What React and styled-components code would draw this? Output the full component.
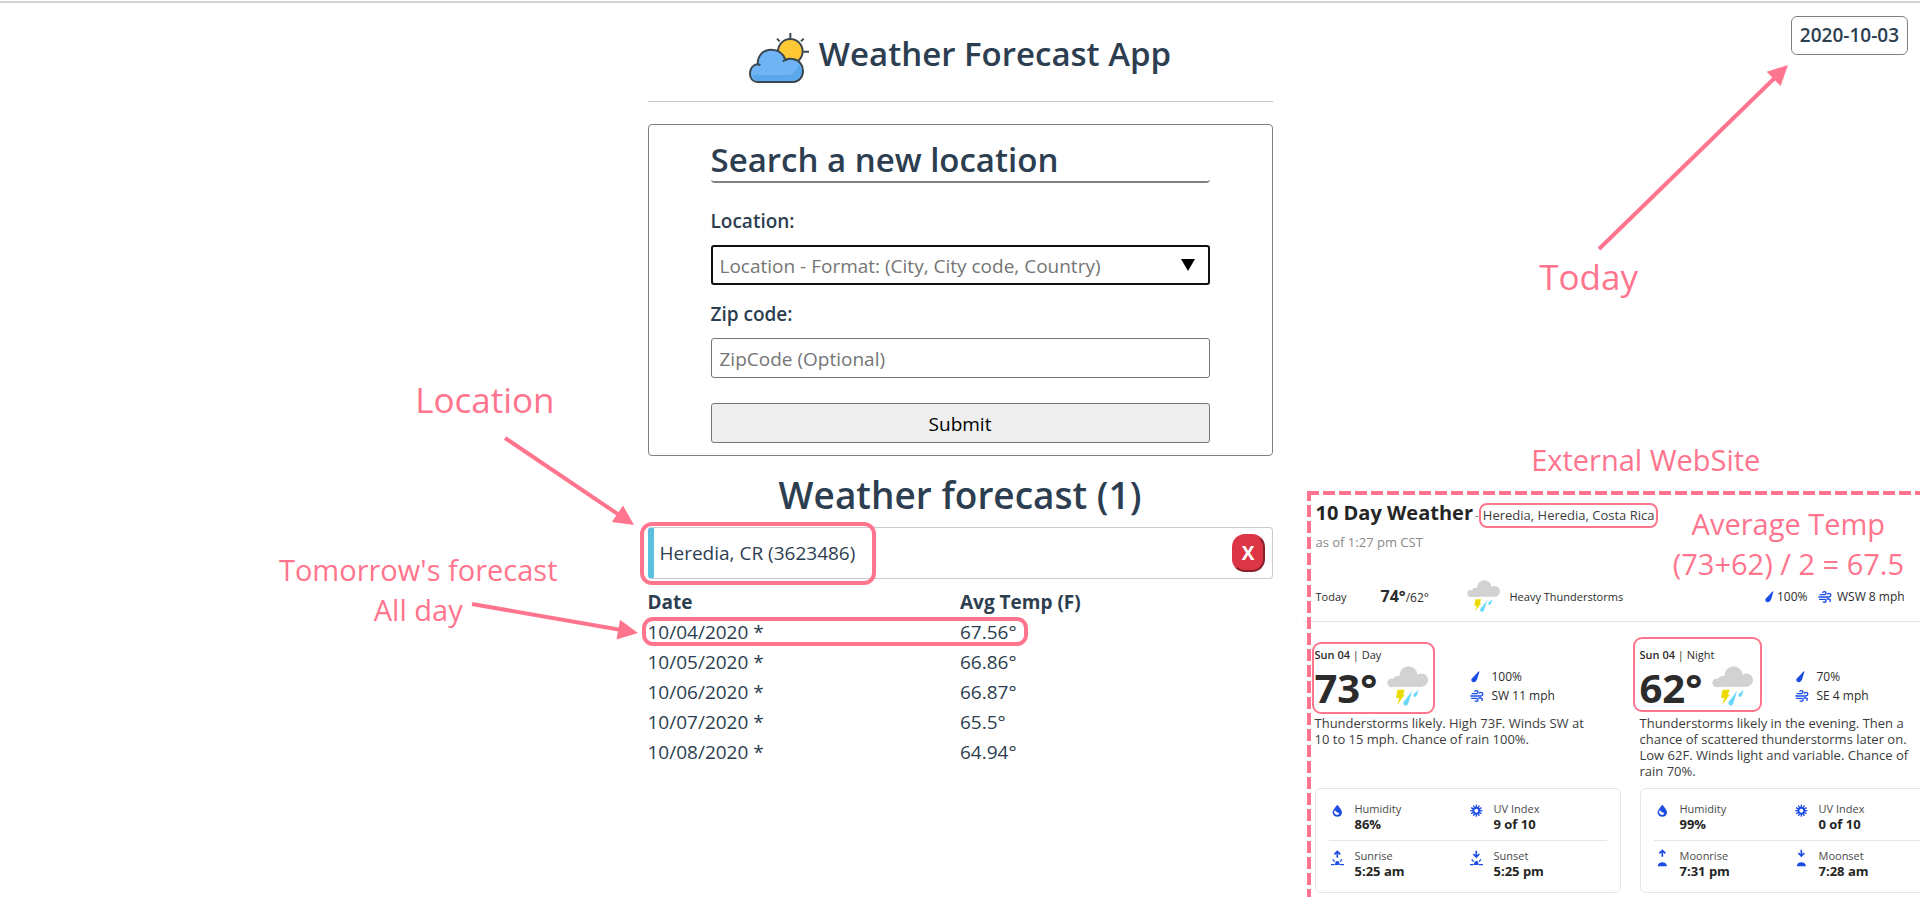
import React from "react";
import styled, { createGlobalStyle } from "styled-components";

const PINK = "#ff758e";
const INK = "#2c3e50";
const BLUE = "#1b4de4";

const GlobalStyle = createGlobalStyle`
  *, *::before, *::after { box-sizing: border-box; }
  body {
    margin: 0;
    background: #fff;
    color: ${INK};
    font-family: "Open Sans", "Noto Sans", sans-serif;
    font-size: 19px;
    line-height: 30px;
  }
  h1, h2, h3, p { margin: 0; }
`;

const Page = styled.div`
  min-height: 100vh;
  padding-top: 1px;
  overflow: hidden;
`;

const TopLine = styled.div`
  height: 2px;
  background: #d1d3d1;
`;

const Columns = styled.div`
  display: grid;
  grid-template-columns: minmax(0, 1fr) 625px minmax(0, 1fr);
`;

const Main = styled.main`
  grid-column: 2;
`;

const Header = styled.header`
  display: flex;
  justify-content: center;
  gap: 10px;
  padding: 26px 0 16px;
  border-bottom: 1px solid #c4c4c4;
`;

const AppTitle = styled.h1`
  font-size: 33px;
  font-weight: 600;
  line-height: 50px;
`;

const SearchForm = styled.form`
  display: flex;
  flex-direction: column;
  margin-top: 22px;
  padding: 14px 62px 12px;
  border: 1px solid #808080;
  border-radius: 4px;
`;

const FormTitle = styled.h2`
  font-size: 33px;
  font-weight: 600;
  line-height: 42px;
  border-bottom: 2px solid #808080;
  border-radius: 4px;
  margin-bottom: 23px;
`;

const Label = styled.label`
  font-weight: 600;
  margin-bottom: 9px;
`;

const Combo = styled.div`
  position: relative;
  display: flex;
  margin-bottom: 14px;

  svg {
    position: absolute;
    right: 15px;
    top: 14px;
  }
`;

const TextInput = styled.input`
  width: 100%;
  height: 40px;
  border: ${(p) => (p.$active ? "2px solid #101010" : "1px solid #767676")};
  padding: ${(p) => (p.$active ? "1px 7px 0" : "1px 8px 0")};
  border-radius: 3px;
  background: #fff;
  color: ${INK};
  font: inherit;
  outline: none;

  &::placeholder {
    color: #757575;
    opacity: 1;
  }
`;

const SubmitButton = styled.button`
  height: 40px;
  margin-top: 25px;
  padding: 2px 8px 0;
  border: 1px solid #767676;
  border-radius: 3px;
  background: #efefef;
  color: #000;
  font: inherit;
`;

const ForecastTitle = styled.h2`
  margin-top: 13px;
  font-size: 37px;
  font-weight: 600;
  line-height: 52px;
  text-align: center;
`;

const Anchor = styled.div`
  position: relative;
  margin-top: ${(p) => p.$top || 0}px;
`;

const LocationCard = styled.div`
  display: flex;
  align-items: center;
  justify-content: space-between;
  height: 52px;
  padding: 0 7px 0 6px;
  border: 1px solid #ccc;
  border-left: 6px solid #5bc0de;
  border-radius: 4px;
`;

const RemoveButton = styled.button`
  width: 33px;
  height: 38px;
  padding: 0;
  border: 2px outset #dc3545;
  border-radius: 13px;
  background: #dc3545;
  color: #fff;
  font: inherit;
  font-weight: 700;
`;

const ForecastTable = styled.table`
  width: 100%;
  margin-top: 8px;
  border-collapse: collapse;
  table-layout: fixed;

  th, td {
    height: 30px;
    padding: 0;
    text-align: left;
  }
`;

const Highlight = styled.span`
  position: absolute;
  border: ${(p) => p.$stroke || 4}px solid ${PINK};
  border-radius: ${(p) => p.$radius || 12}px;
  pointer-events: none;
  top: ${(p) => p.$box[0]}px;
  left: ${(p) => p.$box[1]}px;
  width: ${(p) => p.$box[2]}px;
  height: ${(p) => p.$box[3]}px;
`;

const Note = styled.p`
  color: ${PINK};
  font-size: ${(p) => (p.$large ? 35 : 29)}px;
  line-height: 40px;
  text-align: center;
  white-space: nowrap;
`;

const PinnedNote = styled(Note)`
  position: absolute;
  top: ${(p) => p.$top}px;
  right: ${(p) => p.$right}px;
`;

const ArrowSvg = styled.svg`
  position: absolute;
  top: ${(p) => p.$top}px;
  right: ${(p) => p.$right}px;
`;

const Side = styled.aside`
  grid-column: 3;
  display: flex;
  flex-direction: column;
  padding-left: 34px;
`;

const DateAnchor = styled.div`
  position: relative;
  align-self: flex-end;
  margin: 13px 12px 0 0;
`;

const DateBadge = styled.time`
  display: block;
  padding: 0 8px;
  border: 1px solid #808080;
  border-radius: 6px;
  font-weight: 600;
  line-height: 37px;
`;

const SiteNote = styled(Note)`
  margin: 385px 0 11px;
  padding-left: 65px;
`;

const Site = styled.section`
  position: relative;
  padding: 9px 0 4px 8px;
  color: #2b2b2b;
  font-size: 12px;
  line-height: 16px;

  &::before, &::after {
    content: "";
    position: absolute;
    top: 0;
    left: 0;
  }
  &::before {
    right: 0;
    height: 4px;
    background: repeating-linear-gradient(90deg, ${PINK} 0 12px, transparent 12px 16px);
  }
  &::after {
    bottom: 0;
    width: 4px;
    background: repeating-linear-gradient(180deg, ${PINK} 0 10px, transparent 10px 14px, ${PINK} 14px 16px);
  }
`;

const SiteHeader = styled.header`
  display: flex;
  justify-content: space-between;
  height: 80px;
  padding: 0 16px 0 1px;

  ${Note} { margin-top: 4px; }
`;

const SiteTitleRow = styled.div`
  display: flex;
  align-items: baseline;
  color: #8a8a8a;
`;

const SiteTitle = styled.h2`
  color: #252525;
  font-size: 20px;
  font-weight: 700;
  line-height: 26px;
  margin-right: 2px;
`;

const Place = styled.span`
  padding: 2px;
  border: 2px solid ${PINK};
  border-radius: 8px;
  color: #3c3c3c;
  font-size: 13px;
  line-height: 17px;
  white-space: nowrap;
`;

const AsOf = styled.p`
  margin-top: 4px;
  color: #8a8a8a;
  font-size: 13px;
  line-height: 20px;
`;

const TodayRow = styled.div`
  display: grid;
  grid-template-columns: 65px 86px 43px 1fr 54px 102px;
  align-items: center;
  height: 32px;
  padding-left: 1px;
  font-size: 11px;
  white-space: nowrap;
`;

const TodayTemp = styled.span`
  display: flex;
  align-items: baseline;
  font-size: 12px;

  b { font-size: 16px; }
`;

const IconText = styled.span`
  display: grid;
  grid-template-columns: ${(p) => p.$icon || 19}px auto;
  align-items: center;
  font-size: 12px;
  line-height: 19px;
  white-space: nowrap;
`;

const Rule = styled.hr`
  height: 1px;
  margin: 9px 0 0 -12px;
  border: 0;
  background: #e3e3e3;
`;

const Parts = styled.div`
  display: flex;
  gap: 19px;
  padding-top: 24px;
`;

const Part = styled.article`
  flex: 0 0 306px;
`;

const PartTop = styled.div`
  position: relative;
  display: grid;
  grid-template-columns: 155px auto;
`;

const PartName = styled.h3`
  grid-column: 1 / -1;
  margin-bottom: 2px;
  font-size: 11px;
  font-weight: 400;
  line-height: 18px;

  b { font-weight: 600; }
`;

const PartTemp = styled.div`
  display: grid;
  grid-template-columns: 72px auto;
  height: 44px;
  font-size: 40px;
  font-weight: 700;
  line-height: 44px;
`;

const Facts = styled.div`
  display: flex;
  flex-direction: column;
  padding-top: 1px;
`;

const Summary = styled.p`
  min-height: 64px;
  margin: 5px 30px 9px 0;
  color: #3c3c3c;
  font-size: 13px;
  line-height: 16px;
  white-space: pre-line;
`;

const Details = styled.div`
  padding: 0 13px;
  border: 1px solid #e6e6e6;
  border-radius: 6px;
`;

const DetailRow = styled.div`
  display: grid;
  grid-template-columns: 1fr 1fr;
  padding: 13px 0 8px;

  & + & {
    padding: 8px 0 13px;
    border-top: 1px solid #e6e6e6;
  }
`;

const Detail = styled.div`
  display: grid;
  grid-template-columns: 26px auto;
  font-size: 11px;
  line-height: 14px;
  color: #4a4a4a;

  strong {
    display: block;
    color: #252525;
    font-size: 13px;
    line-height: 16px;
  }
`;

function Arrow({ width, height, from, to, top, right }) {
  const angle = Math.atan2(to[1] - from[1], to[0] - from[0]);
  const along = (d, s) =>
    `${to[0] - d * Math.cos(angle) - s * Math.sin(angle)},${to[1] - d * Math.sin(angle) + s * Math.cos(angle)}`;
  const [neckX, neckY] = along(14, 0).split(",");
  return (
    <ArrowSvg width={width} height={height} $top={top} $right={right} aria-hidden="true">
      <line x1={from[0]} y1={from[1]} x2={neckX} y2={neckY} stroke={PINK} strokeWidth="4" />
      <polygon points={`${to.join(",")} ${along(20, 10)} ${along(20, -10)}`} fill={PINK} />
    </ArrowSvg>
  );
}

function AppLogo() {
  return (
    <svg width="60" height="56" viewBox="27 12 180 168" aria-hidden="true">
      <g stroke="#3a474e" strokeWidth="6" strokeLinecap="butt" strokeLinejoin="round">
        <circle cx="151" cy="79" r="37" fill="#ffc935" />
        <path
          d="M52 171C38 170 30 159 30 146C30 131 39 119 53 117C53 91 70 74 93 74C115 74 130 86 136 104C142 102 150 101 158 102C178 105 189 120 189 137C189 157 176 170 159 171Z"
          fill="#6fb5f5"
        />
        <path d="M151 24V40M111 41L119 49M191 41L183 49M190 80H207" fill="none" />
        <path d="M51 118Q57 118 61 121M128 109Q135 104 142 104" fill="none" />
      </g>
      <path d="M46 150H145Q168 150 174 118Q190 130 183 149Q177 166 159 167H54Q42 166 36 151Z" fill="#5ba7ec" />
    </svg>
  );
}

function StormIcon({ size }) {
  return (
    <svg width={size} height={size} viewBox="261 107 122 120" aria-hidden="true">
      <g fill="#d2d2d2">
        <circle cx="325" cy="134" r="27" />
        <circle cx="363" cy="148" r="20" />
        <circle cx="294" cy="152" r="17" />
        <circle cx="275" cy="156" r="13" />
        <rect x="275" y="148" width="88" height="20" />
      </g>
      <path d="M292 177H314L308 191H314L292 221L297 201H288Z" fill="#eddb00" />
      <path d="M336 180L310 214Q309 223 316 224Q321 224 324 218Z" fill="#67d9fb" />
      <path d="M355 177L340 190Q338 197 343 198Q348 198 350 193Z" fill="#67d9fb" />
    </svg>
  );
}

function RainIcon() {
  return (
    <svg width="10" height="12" viewBox="0 0 30 36" aria-hidden="true">
      <path d="M26 1Q28 1 28 3L21 26Q17 34 9 34Q2 31 4 25Q6 21 10 18Z" fill={BLUE} />
    </svg>
  );
}

function WindIcon() {
  return (
    <svg width="14" height="12" viewBox="507 179 41 36" fill="none" stroke={BLUE} strokeWidth="4" strokeLinecap="round" aria-hidden="true">
      <path d="M513 190H526Q532 188 530 183Q526 179 521 183" />
      <path d="M509 197H539Q547 195 544 188Q539 184 535 188" />
      <path d="M511 204H526Q532 206 530 211Q527 214 522 212" />
      <path d="M533 203H541Q546 206 542 210" />
    </svg>
  );
}

function HumidityIcon() {
  return (
    <svg width="17" height="16" viewBox="-7 -2 51 48" aria-hidden="true">
      <path d="M18 6Q32 22 32 29A14 13 0 0 1 4 29Q4 22 18 6Z" fill={BLUE} />
      <path d="M11 23A8 8 0 1 0 24 32Q16 31 11 23Z" fill="#fff" />
    </svg>
  );
}

function UvIcon() {
  const rays = Array.from({ length: 12 }, (_, i) => i * 30);
  return (
    <svg width="17" height="16" viewBox="-7 -2 51 48" aria-hidden="true">
      <g stroke={BLUE} strokeWidth="4">
        {rays.map((a) => (
          <path key={a} d="M18 6V13" transform={`rotate(${a} 18 24)`} />
        ))}
      </g>
      <circle cx="18" cy="24" r="9" fill="none" stroke={BLUE} strokeWidth="6" />
    </svg>
  );
}

function RiseSetIcon({ moon, set }) {
  const arrow = set ? "M18 0V19M9 10L18 19L27 10" : "M18 21V2M9 11L18 2L27 11";
  return (
    <svg width="17" height="18" viewBox="-7 -2 51 54" aria-hidden="true">
      <path
        d={arrow}
        fill="none"
        stroke={BLUE}
        strokeWidth="5"
        transform={moon ? undefined : "translate(0 3)"}
      />
      {moon ? (
        <path d="M4 50Q6 38 18 38Q30 38 32 50Z" fill={BLUE} />
      ) : (
        <g stroke={BLUE} strokeWidth="4" fill="none">
          <path d="M-1 45H10M26 45H38M4 29L10 36M32 29L26 36" />
          <path d="M11 46Q11 34 18 34Q25 34 25 46Z" fill={BLUE} stroke="none" />
        </g>
      )}
    </svg>
  );
}

const forecast = [
  ["10/04/2020 *", "67.56°"],
  ["10/05/2020 *", "66.86°"],
  ["10/06/2020 *", "66.87°"],
  ["10/07/2020 *", "65.5°"],
  ["10/08/2020 *", "64.94°"],
];

const parts = [
  {
    name: "Day",
    temp: "73°",
    rain: "100%",
    wind: "SW 11 mph",
    summary: "Thunderstorms likely. High 73F. Winds SW at\n10 to 15 mph. Chance of rain 100%.",
    box: [-4, -3, 123, 72],
    details: [
      ["Humidity", "86%", <HumidityIcon />],
      ["UV Index", "9 of 10", <UvIcon />],
      ["Sunrise", "5:25 am", <RiseSetIcon />],
      ["Sunset", "5:25 pm", <RiseSetIcon set />],
    ],
  },
  {
    name: "Night",
    temp: "62°",
    rain: "70%",
    wind: "SE 4 mph",
    summary:
      "Thunderstorms likely in the evening. Then a\nchance of scattered thunderstorms later on.\nLow 62F. Winds light and variable. Chance of\nrain 70%.",
    box: [-9, -7, 129, 75],
    details: [
      ["Humidity", "99%", <HumidityIcon />],
      ["UV Index", "0 of 10", <UvIcon />],
      ["Moonrise", "7:31 pm", <RiseSetIcon moon />],
      ["Moonset", "7:28 am", <RiseSetIcon moon set />],
    ],
  },
];

function DayPart({ part }) {
  return (
    <Part>
      <PartTop>
        <PartName>
          <b>Sun 04</b> | {part.name}
        </PartName>
        <PartTemp>
          {part.temp}
          <StormIcon size={41} />
        </PartTemp>
        <Facts>
          <IconText $icon={22}>
            <RainIcon />
            {part.rain}
          </IconText>
          <IconText $icon={22}>
            <WindIcon />
            {part.wind}
          </IconText>
        </Facts>
        <Highlight $box={part.box} $stroke={2} $radius={9} />
      </PartTop>
      <Summary>{part.summary}</Summary>
      <Details>
        {[part.details.slice(0, 2), part.details.slice(2)].map((row) => (
          <DetailRow key={row[0][0]}>
            {row.map(([label, value, icon]) => (
              <Detail key={label}>
                {icon}
                <div>
                  {label}
                  <strong>{value}</strong>
                </div>
              </Detail>
            ))}
          </DetailRow>
        ))}
      </Details>
    </Part>
  );
}

export default function App() {
  return (
    <Page>
      <GlobalStyle />
      <TopLine />
      <Columns>
        <Main>
          <Header>
            <AppLogo />
            <AppTitle>Weather Forecast App</AppTitle>
          </Header>

          <SearchForm onSubmit={(e) => e.preventDefault()}>
            <FormTitle>Search a new location</FormTitle>
            <Label htmlFor="location">Location:</Label>
            <Combo>
              <TextInput id="location" $active placeholder="Location - Format: (City, City code, Country)" />
              <svg width="14" height="12" aria-hidden="true">
                <path d="M0 0H14L7 12Z" />
              </svg>
            </Combo>
            <Label htmlFor="zip">Zip code:</Label>
            <TextInput id="zip" placeholder="ZipCode (Optional)" />
            <SubmitButton type="submit">Submit</SubmitButton>
          </SearchForm>

          <ForecastTitle>Weather forecast (1)</ForecastTitle>
          <Anchor $top={6}>
            <LocationCard>
              <span>Heredia, CR (3623486)</span>
              <RemoveButton type="button" aria-label="Remove Heredia">X</RemoveButton>
            </LocationCard>
            <Highlight $box={[-5, -8, 236, 63]} />
            <PinnedNote $large $top={-147} $right={718}>Location</PinnedNote>
            <Arrow width={144} height={100} top={-97} right={633} from={[9, 8]} to={[138, 95]} />
          </Anchor>

          <Anchor>
            <ForecastTable>
              <thead>
                <tr>
                  <th>Date</th>
                  <th>Avg Temp (F)</th>
                </tr>
              </thead>
              <tbody>
                {forecast.map(([date, temp]) => (
                  <tr key={date}>
                    <td>{date}</td>
                    <td>{temp}</td>
                  </tr>
                ))}
              </tbody>
            </ForecastTable>
            <Highlight $box={[30, -6, 386, 29]} $radius={11} />
            <PinnedNote $top={-37} $right={715}>
              Tomorrow's forecast
              <br />
              All day
            </PinnedNote>
            <Arrow width={176} height={50} top={9} right={633} from={[8, 8]} to={[174, 37]} />
          </Anchor>
        </Main>

        <Side>
          <DateAnchor>
            <DateBadge dateTime="2020-10-03">2020-10-03</DateBadge>
            <PinnedNote $large $top={241} $right={270}>Today</PinnedNote>
            <Arrow width={200} height={200} top={44} right={116} from={[7, 189]} to={[196, 5]} />
          </DateAnchor>
          <SiteNote>External WebSite</SiteNote>
          <Site>
            <SiteHeader>
              <div>
                <SiteTitleRow>
                  <SiteTitle>10 Day Weather</SiteTitle>-<Place>Heredia, Heredia, Costa Rica</Place>
                </SiteTitleRow>
                <AsOf>as of 1:27 pm CST</AsOf>
              </div>
              <Note>
                Average Temp
                <br />
                (73+62) / 2 = 67.5
              </Note>
            </SiteHeader>
            <TodayRow>
              <span>Today</span>
              <TodayTemp>
                <b>74°</b>/62°
              </TodayTemp>
              <StormIcon size={33} />
              <span>Heavy Thunderstorms</span>
              <IconText $icon={13}>
                <RainIcon />
                100%
              </IconText>
              <IconText>
                <WindIcon />
                WSW 8 mph
              </IconText>
            </TodayRow>
            <Rule />
            <Parts>
              {parts.map((part) => (
                <DayPart key={part.name} part={part} />
              ))}
            </Parts>
          </Site>
        </Side>
      </Columns>
    </Page>
  );
}
